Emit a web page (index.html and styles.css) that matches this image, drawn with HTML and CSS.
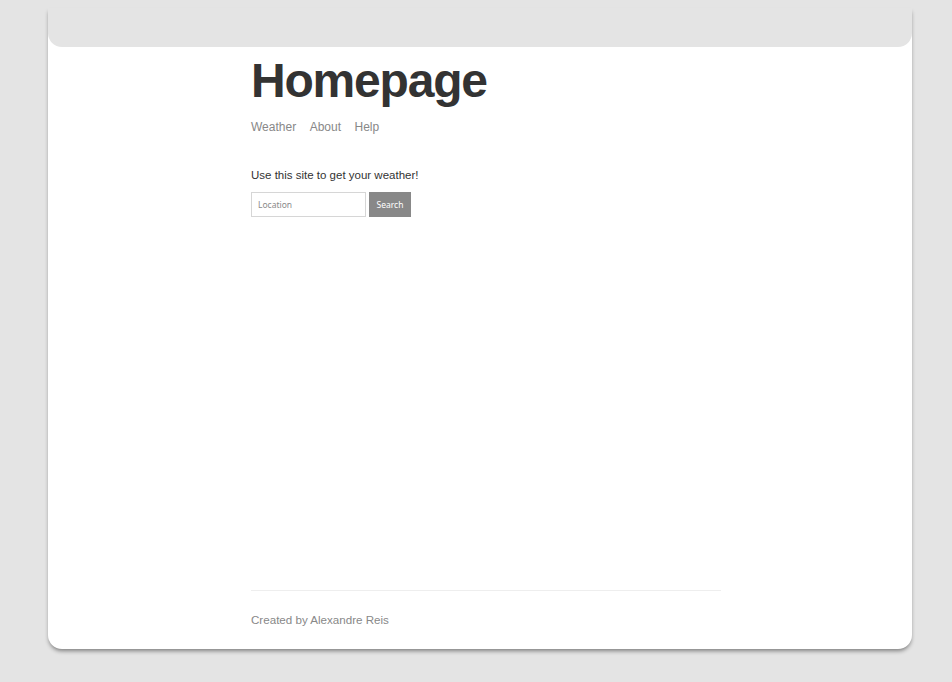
FILE: index.html
```html
<!DOCTYPE html>
<html lang="en">
<head>
<meta charset="utf-8">
<title>Homepage</title>
<link rel="stylesheet" href="styles.css">
</head>
<body>
<div class="card">
  <div class="topbar"></div>
  <div class="content">
    <main class="main">
      <h1 class="title">Homepage</h1>
      <nav class="nav">
        <a href="#">Weather</a>
        <a href="#">About</a>
        <a href="#">Help</a>
      </nav>
      <p class="intro">Use this site to get your weather!</p>
      <form class="search">
        <input class="search-input" type="text" placeholder="Location">
        <button class="search-btn" type="button">Search</button>
      </form>
    </main>
    <footer class="footer">
      <p class="credit">Created by Alexandre Reis</p>
    </footer>
  </div>
</div>
</body>
</html>
```
FILE: styles.css
```css
html, body {
  margin: 0;
  padding: 0;
  height: 100%;
}
body {
  background: #e4e4e4;
  font-family: "Liberation Sans", Arial, sans-serif;
  padding: 8px 40px 0 48px;
  box-sizing: border-box;
}
.card {
  height: 641px;
  background: #ffffff;
  border-radius: 0 0 14px 14px;
  box-shadow: 0 3px 4px -1px rgba(0, 0, 0, 0.45);
  display: flex;
  flex-direction: column;
  overflow: hidden;
}
.topbar {
  height: 39px;
  background: #e4e4e4;
  border-radius: 0 0 14px 14px;
  flex: none;
}
.content {
  flex: 1;
  display: flex;
  flex-direction: column;
  width: 470px;
  margin-left: 203px;
}
.main {
  flex: 1;
}
.title {
  margin: 10px 0 0;
  font-size: 48px;
  line-height: 48px;
  font-weight: bold;
  letter-spacing: -1.2px;
  color: #333333;
}
.nav {
  margin-top: 15px;
  display: flex;
  gap: 13.5px;
  font-size: 12px;
  line-height: 14px;
}
.nav a {
  color: #888888;
  text-decoration: none;
}
.intro {
  margin: 34px 0 0;
  font-size: 11.5px;
  line-height: 14px;
  color: #333333;
}
.search {
  margin-top: 10px;
  display: flex;
  gap: 3px;
}
.search-input {
  width: 115px;
  height: 25px;
  box-sizing: border-box;
  border: 1px solid #d6d6d6;
  padding: 0 6px;
  font-family: "Noto Sans", "Open Sans", sans-serif;
  font-size: 8.5px;
  color: #333;
  outline: none;
}
.search-input::placeholder {
  color: #8a8a8a;
}
.search-btn {
  width: 42px;
  height: 25px;
  border: none;
  background: #888888;
  color: #ffffff;
  font-family: "Noto Sans", "Open Sans", sans-serif;
  font-size: 8.5px;
  padding: 0;
}
.footer {
  border-top: 1px solid #eeeeee;
  padding-bottom: 22px;
}
.credit {
  margin: 22px 0 0;
  font-size: 11.6px;
  line-height: 14px;
  color: #888888;
}
```
